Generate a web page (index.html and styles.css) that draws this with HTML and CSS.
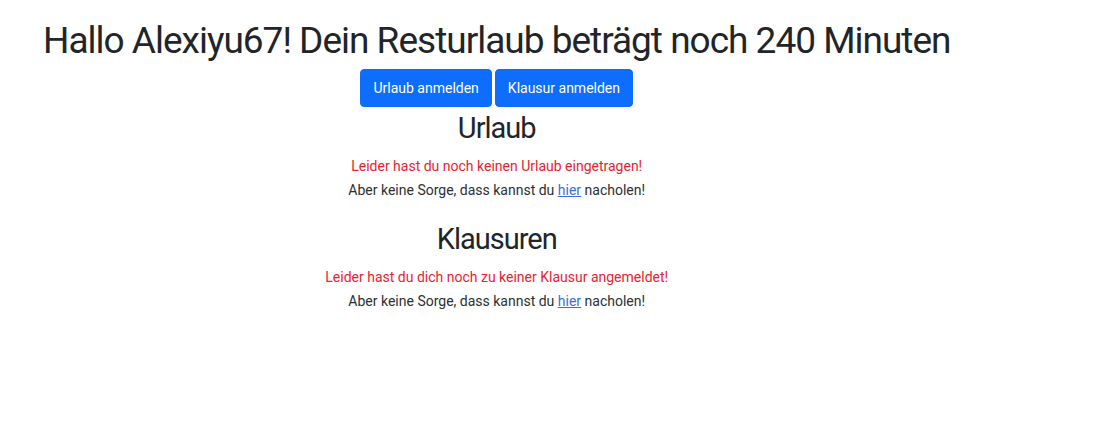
FILE: index.html
```html
<!DOCTYPE html>
<html lang="de">
<head>
<meta charset="utf-8">
<title>Resturlaub</title>
<link rel="stylesheet" href="styles.css">
</head>
<body>
<main class="page">
  <div class="content">
    <h1 class="title">Hallo Alexiyu67! Dein Resturlaub beträgt noch 240 Minuten</h1>
    <div class="actions">
      <a class="btn" href="#">Urlaub anmelden</a>
      <a class="btn" href="#">Klausur anmelden</a>
    </div>
    <section class="block">
      <h2 class="block-title">Urlaub</h2>
      <p class="note">
        <span class="warn">Leider hast du noch keinen Urlaub eingetragen!</span><br>
        Aber keine Sorge, dass kannst du <a class="link" href="#">hier</a> nacholen!
      </p>
    </section>
    <section class="block">
      <h2 class="block-title">Klausuren</h2>
      <p class="note">
        <span class="warn">Leider hast du dich noch zu keiner Klausur angemeldet!</span><br>
        Aber keine Sorge, dass kannst du <a class="link" href="#">hier</a> nacholen!
      </p>
    </section>
  </div>
</main>
</body>
</html>
```

FILE: styles.css
```css
html, body {
  margin: 0;
  padding: 0;
  background: #fff;
}
body {
  font-family: Roboto, "Liberation Sans", sans-serif;
  color: #212529;
  font-size: 16px;
  line-height: 1.5;
}
.page {
  padding: 17px 0 0 43px;
}
.content {
  display: inline-flex;
  flex-direction: column;
  align-items: center;
  text-align: center;
}
.title {
  margin: 0 0 4px;
  font-size: 37px;
  font-weight: 400;
  letter-spacing: -1px;
  line-height: 48px;
  white-space: nowrap;
}
.actions {
  display: flex;
  gap: 3px;
}
.btn {
  display: inline-block;
  padding: 6px 12px;
  border: 1px solid #0d6efd;
  border-radius: 4px;
  background: #0d6efd;
  color: #fff;
  text-decoration: none;
  font-size: 14px;
  line-height: 24px;
}
.block-title {
  margin: 0 0 5px;
  font-size: 29px;
  font-weight: 400;
  letter-spacing: -1px;
  line-height: 42px;
}
.note {
  margin: 0 0 16px;
  font-size: 14px;
  line-height: 24px;
  color: #2b2f33;
}
.warn {
  color: #e8222f;
}
.link {
  color: #3b6fd6;
}
```
